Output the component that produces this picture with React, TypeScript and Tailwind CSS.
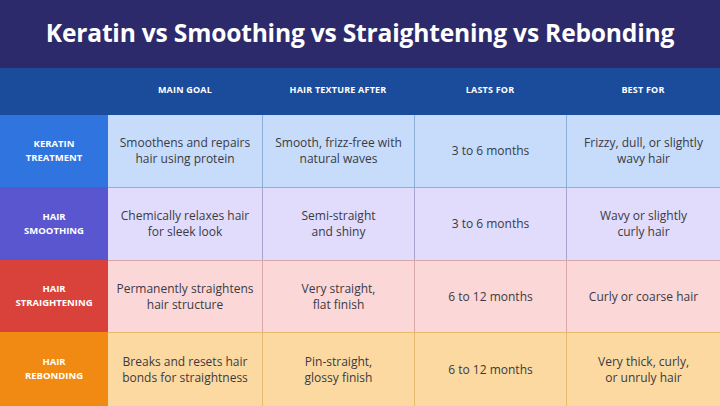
import { Fragment } from "react";

const rows = [
  {
    label: ["KERATIN", "TREATMENT"],
    labelBg: "bg-[#2f74df]",
    cellBg: "bg-[#c6dcfa]",
    border: "border-[#8eaed6]",
    cells: [
      ["Smoothens and repairs", "hair using protein"],
      ["Smooth, frizz-free with", "natural waves"],
      ["3 to 6 months"],
      ["Frizzy, dull, or slightly", "wavy hair"],
    ],
  },
  {
    label: ["HAIR", "SMOOTHING"],
    labelBg: "bg-[#5a56cf]",
    cellBg: "bg-[#e1dcfb]",
    border: "border-[#a8a2cc]",
    cells: [
      ["Chemically relaxes hair", "for sleek look"],
      ["Semi-straight", "and shiny"],
      ["3 to 6 months"],
      ["Wavy or slightly", "curly hair"],
    ],
  },
  {
    label: ["HAIR", "STRAIGHTENING"],
    labelBg: "bg-[#d9423a]",
    cellBg: "bg-[#fbd7d7]",
    border: "border-[#d6a8a8]",
    cells: [
      ["Permanently straightens", "hair structure"],
      ["Very straight,", "flat finish"],
      ["6 to 12 months"],
      ["Curly or coarse hair"],
    ],
  },
  {
    label: ["HAIR", "REBONDING"],
    labelBg: "bg-[#f08a13]",
    cellBg: "bg-[#fbd9a1]",
    border: "border-[#e5b96e]",
    cells: [
      ["Breaks and resets hair", "bonds for straightness"],
      ["Pin-straight,", "glossy finish"],
      ["6 to 12 months"],
      ["Very thick, curly,", "or unruly hair"],
    ],
  },
];

const headers = ["MAIN GOAL", "HAIR TEXTURE AFTER", "LASTS FOR", "BEST FOR"];

export default function App() {
  return (
    <div
      className="w-[720px] h-[406px] overflow-hidden flex flex-col bg-[#2d2a6c]"
      style={{ fontFamily: '"Open Sans", sans-serif' }}
    >
      <div className="h-[68px] flex items-center justify-center pb-[2px]">
        <h1 className="text-white font-bold text-[24.6px] tracking-[-0.2px]">
          Keratin vs Smoothing vs Straightening vs Rebonding
        </h1>
      </div>

      <div className="grid grid-cols-[108px_154px_152px_152px_154px] grid-rows-[47px_72px_73px_72px_74px]">
        <div className="bg-[#1b4b9b]" />
        {headers.map((h) => (
          <div
            key={h}
            className="bg-[#1b4b9b] flex items-center justify-center text-white font-bold text-[9px] tracking-[0.2px] pb-1"
          >
            {h}
          </div>
        ))}

        {rows.map((r, ri) => (
          <Fragment key={ri}>
            <div
              className={`${r.labelBg} flex flex-col items-center justify-center text-white font-bold text-[9.5px] leading-[14px]`}
            >
              {r.label.map((t) => (
                <span key={t}>{t}</span>
              ))}
            </div>
            {r.cells.map((c, ci) => (
              <div
                key={ci}
                className={`${r.cellBg} ${r.border} ${ci > 0 ? "border-l" : ""} ${ri > 0 ? "border-t" : ""} flex flex-col items-center justify-center text-[#3a3a44] text-[12px] leading-[16px]`}
              >
                {c.map((t) => (
                  <span key={t}>{t}</span>
                ))}
              </div>
            ))}
          </Fragment>
        ))}
      </div>
    </div>
  );
}
